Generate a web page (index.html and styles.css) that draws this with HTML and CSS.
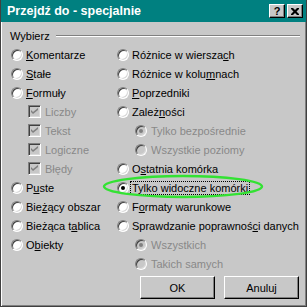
FILE: index.html
```html
<html>
  <head>
    <link rel="stylesheet" href="styles.css">
  </head>
  <body>
    <div class="window">
      <div class="titlebar">
        <span class="title">Przejdź do - specjalnie</span>
        <div class="tbtns">
          <div class="tbtn">?</div>
          <div class="tbtn">
            <svg width="8" height="7" viewBox="0 0 8 7"><path d="M0 0h2l2 2 2-2h2v1L5.5 3.5 8 6v1H6L4 5 2 7H0V6l2.5-2.5L0 1z" fill="#000"/></svg>
          </div>
        </div>
      </div>
      <div class="content">
        <div class="group-head">
          <span>Wybierz</span>
          <div class="etch"></div>
        </div>
        <div class="options">
          <div class="col">
            <div class="opt"><span class="radio"></span><span><u>K</u>omentarze</span></div>
            <div class="opt"><span class="radio"></span><span><u>S</u>tałe</span></div>
            <div class="opt"><span class="radio"></span><span><u>F</u>ormuły</span></div>
            <div class="opt sub dis"><span class="check"><svg width="7" height="7" viewBox="0 0 7 7"><path d="M0 2l2 2 5-4v2L2 6 0 4z" fill="#808080"/></svg></span><span>Liczby</span></div>
            <div class="opt sub dis"><span class="check"><svg width="7" height="7" viewBox="0 0 7 7"><path d="M0 2l2 2 5-4v2L2 6 0 4z" fill="#808080"/></svg></span><span>Tekst</span></div>
            <div class="opt sub dis"><span class="check"><svg width="7" height="7" viewBox="0 0 7 7"><path d="M0 2l2 2 5-4v2L2 6 0 4z" fill="#808080"/></svg></span><span>Logiczne</span></div>
            <div class="opt sub dis"><span class="check"><svg width="7" height="7" viewBox="0 0 7 7"><path d="M0 2l2 2 5-4v2L2 6 0 4z" fill="#808080"/></svg></span><span>Błędy</span></div>
            <div class="opt"><span class="radio"></span><span>P<u>u</u>ste</span></div>
            <div class="opt"><span class="radio"></span><span>Bie<u>ż</u>ący obszar</span></div>
            <div class="opt"><span class="radio"></span><span>Bieżąca t<u>a</u>blica</span></div>
            <div class="opt"><span class="radio"></span><span>O<u>b</u>iekty</span></div>
          </div>
          <div class="col">
            <div class="opt"><span class="radio"></span><span>Różnice w wiersza<u>c</u>h</span></div>
            <div class="opt"><span class="radio"></span><span>Różnice w kolu<u>m</u>nach</span></div>
            <div class="opt"><span class="radio"></span><span><u>P</u>oprzedniki</span></div>
            <div class="opt"><span class="radio"></span><span>Zależ<u>n</u>ości</span></div>
            <div class="opt sub dis"><span class="radio on"></span><span>Tylko bezpośrednie</span></div>
            <div class="opt sub dis"><span class="radio"></span><span>Wszystkie poziomy</span></div>
            <div class="opt"><span class="radio"></span><span>O<u>s</u>tatnia komórka</span></div>
            <div class="opt"><span class="radio on"></span><span class="focus">Tylko widoczne komórki</span></div>
            <div class="opt"><span class="radio"></span><span>F<u>o</u>rmaty warunkowe</span></div>
            <div class="opt"><span class="radio"></span><span>Sprawdzanie poprawnoś<u>c</u>i danych</span></div>
            <div class="opt sub dis"><span class="radio on"></span><span>Wszystkich</span></div>
            <div class="opt sub dis"><span class="radio"></span><span>Takich samych</span></div>
          </div>
        </div>
        <div class="buttons">
          <button class="button">OK</button>
          <button class="button">Anuluj</button>
        </div>
      </div>
      <svg class="annot" width="307" height="307" viewBox="0 0 307 307">
        <ellipse cx="183" cy="186.5" rx="79" ry="10.5" fill="none" stroke="#33e233" stroke-width="2.4"/>
      </svg>
    </div>
  </body>
</html>
```

FILE: styles.css
```css
* {
  box-sizing: border-box;
}

body {
  margin: 0;
  font-family: "Liberation Sans", Arial, sans-serif;
  font-size: 11px;
  color: #000;
}

.window {
  position: relative;
  width: 307px;
  height: 307px;
  background: #c8c8c8;
  border-left: 1px solid #404040;
  border-right: 1px solid #404040;
  border-bottom: 1px solid #404040;
  box-shadow: inset 1px 0 #fff, inset -1px -1px #808080;
}

.titlebar {
  height: 22px;
  background: #008080;
  color: #fff;
  display: flex;
  align-items: center;
  justify-content: space-between;
  padding: 0 3px 0 6px;
}

.title {
  font-weight: bold;
  font-size: 12.5px;
}

.tbtns {
  display: flex;
  gap: 2px;
}

.tbtn {
  width: 16px;
  height: 14px;
  background: #c8c8c8;
  border: 1px solid;
  border-color: #fff #000 #000 #fff;
  box-shadow: inset -1px -1px #808080;
  color: #000;
  font-weight: bold;
  font-size: 11px;
  display: flex;
  align-items: center;
  justify-content: center;
}

.content {
  padding: 7px 6px 0 9px;
}

.group-head {
  display: flex;
  align-items: center;
  gap: 6px;
  height: 13px;
}

.etch {
  flex: 1;
  border-top: 1px solid #808080;
  border-bottom: 1px solid #fff;
}

.options {
  display: grid;
  grid-template-columns: 106px 1fr;
  margin: 3px 0 0 1px;
}

.opt {
  display: flex;
  align-items: center;
  gap: 3px;
  height: 19px;
  white-space: nowrap;
}

.opt.sub {
  padding-left: 17px;
  gap: 4px;
}

.col:last-child .opt.sub {
  padding-left: 18px;
}

.opt.dis {
  color: #888;
}

.radio {
  position: relative;
  flex: none;
  width: 12px;
  height: 12px;
  border-radius: 50%;
  background: #fff;
  border: 1px solid;
  border-color: #808080 #fff #fff #808080;
  box-shadow: inset 1px 1px #404040, inset -1px -1px #d8d8d8;
}

.dis .radio {
  background: #c8c8c8;
}

.radio.on::after {
  content: "";
  position: absolute;
  left: 3px;
  top: 3px;
  width: 4px;
  height: 4px;
  border-radius: 50%;
  background: #000;
}

.dis .radio.on::after {
  background: #808080;
}

.check {
  flex: none;
  width: 13px;
  height: 13px;
  background: #c8c8c8;
  border: 1px solid;
  border-color: #808080 #fff #fff #808080;
  box-shadow: inset 1px 1px #404040, inset -1px -1px #d8d8d8;
  display: flex;
  align-items: center;
  justify-content: center;
}

.focus {
  border: 1px dotted #000;
  padding: 0 1px;
  margin-left: -2px;
}

.buttons {
  display: flex;
  justify-content: flex-end;
  gap: 9px;
  margin-top: 3px;
  padding-right: 1px;
}

.button {
  width: 75px;
  height: 23px;
  background: #c8c8c8;
  border: 1px solid;
  border-color: #fff #000 #000 #fff;
  box-shadow: inset -1px -1px #808080;
  font-family: "Liberation Sans", Arial, sans-serif;
  font-size: 11px;
  color: #000;
  padding: 0;
}

.annot {
  position: absolute;
  left: -1px;
  top: 0;
  pointer-events: none;
}
```
